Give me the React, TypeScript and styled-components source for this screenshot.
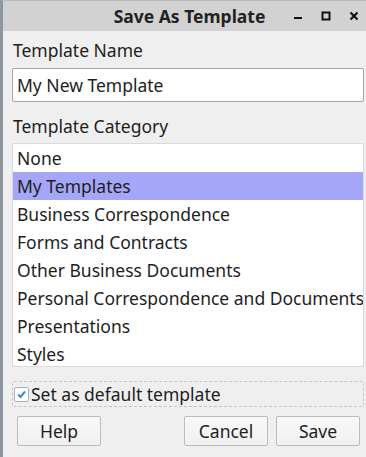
import React, { useState } from 'react';
import styled, { createGlobalStyle } from 'styled-components';

const GlobalStyle = createGlobalStyle`
  html, body {
    margin: 0;
    padding: 0;
    width: 366px;
    height: 457px;
    overflow: hidden;
    background: #efefef;
  }
  #root {
    height: 100%;
  }
`;

const Window = styled.div`
  display: flex;
  flex-direction: column;
  height: 457px;
  box-sizing: border-box;
  border-left: 3px solid #8e96a0;
  border-top: 1px solid #b8bcc2;
  background: #efefef;
  font-family: 'Noto Sans', 'Open Sans', sans-serif;
  font-size: 17.5px;
  color: #1e1e1e;
`;

const TitleBar = styled.div`
  display: flex;
  align-items: center;
  height: 30px;
  background: #d2d2d2;
  padding-right: 4px;
`;

const Title = styled.div`
  flex: 1;
  text-align: center;
  font-weight: bold;
  font-size: 17.5px;
  padding-left: 86px;
  color: #222;
  white-space: nowrap;
`;

const Controls = styled.div`
  display: flex;
  align-items: center;
  gap: 12px;
`;

const ControlButton = styled.span`
  display: flex;
  align-items: center;
  justify-content: center;
  width: 16px;
  height: 16px;
`;

const Body = styled.div`
  display: flex;
  flex-direction: column;
  flex: 1;
  padding: 5px 2px 0 9px;
`;

const Label = styled.div`
  height: 29px;
  line-height: 29px;
  padding-left: 1px;
`;

const TextInput = styled.input`
  box-sizing: border-box;
  height: 34px;
  width: 100%;
  border: 1px solid #a6a6a6;
  border-radius: 2px;
  background: #fff;
  padding: 0 4px;
  font: inherit;
  color: inherit;
  outline: none;
  margin: 3px 0 10px;
`;

const List = styled.ul`
  list-style: none;
  margin: 2px 0 0;
  padding: 0;
  background: #fff;
  border: 1px solid #dadada;
  height: 224px;
  box-sizing: border-box;
  overflow: hidden;
`;

const Item = styled.li<{ $selected?: boolean }>`
  height: 28px;
  line-height: 28px;
  padding-left: 4px;
  white-space: nowrap;
  background: ${(p) => (p.$selected ? '#a6a6f8' : 'transparent')};
`;

const CheckRow = styled.label`
  display: flex;
  align-items: center;
  gap: 2px;
  height: 26px;
  margin-top: 14px;
  padding-left: 1px;
  border: 1px dashed #c4c4d4;
  border-radius: 2px;
  box-sizing: border-box;
`;

const CheckBox = styled.span`
  display: flex;
  align-items: center;
  justify-content: center;
  width: 13px;
  height: 13px;
  border: 1px solid #b0b0b0;
  border-radius: 2px;
  background: #fff;
`;

const ButtonRow = styled.div`
  display: flex;
  gap: 8px;
  margin-top: 9px;
  padding: 0 4px 0 5px;
`;

const Spacer = styled.div`
  flex: 1;
`;

const Button = styled.button`
  width: 84px;
  height: 30px;
  box-sizing: border-box;
  border: 1px solid #bcbcbc;
  border-radius: 2px;
  background: linear-gradient(#f8f8f8, #f0f0f0);
  font: inherit;
  color: inherit;
  padding: 0;
`;

const categories = [
  'None',
  'My Templates',
  'Business Correspondence',
  'Forms and Contracts',
  'Other Business Documents',
  'Personal Correspondence and Documents',
  'Presentations',
  'Styles',
];

export default function App() {
  const [name, setName] = useState('My New Template');
  const [selected, setSelected] = useState(1);

  return (
    <>
      <GlobalStyle />
      <Window>
        <TitleBar>
          <Title>Save As Template</Title>
          <Controls>
            <ControlButton>
              <svg width="10" height="10" viewBox="0 0 10 10">
                <rect x="1" y="6" width="8" height="2" fill="#111" />
              </svg>
            </ControlButton>
            <ControlButton>
              <svg width="10" height="10" viewBox="0 0 10 10">
                <rect x="1.5" y="1.5" width="7" height="7" fill="none" stroke="#111" strokeWidth="2" />
              </svg>
            </ControlButton>
            <ControlButton>
              <svg width="10" height="10" viewBox="0 0 10 10">
                <path d="M1.5 1.5 L8.5 8.5 M8.5 1.5 L1.5 8.5" stroke="#111" strokeWidth="2.2" />
              </svg>
            </ControlButton>
          </Controls>
        </TitleBar>
        <Body>
          <Label>Template Name</Label>
          <TextInput value={name} onChange={(e) => setName(e.target.value)} />
          <Label>Template Category</Label>
          <List>
            {categories.map((c, i) => (
              <Item key={c} $selected={i === selected} onClick={() => setSelected(i)}>
                {c}
              </Item>
            ))}
          </List>
          <CheckRow>
            <CheckBox>
              <svg width="11" height="11" viewBox="0 0 11 11">
                <path d="M2 5.5 L4.5 8 L9 2.5" fill="none" stroke="#4a86c8" strokeWidth="2" />
              </svg>
            </CheckBox>
            Set as default template
          </CheckRow>
          <ButtonRow>
            <Button>Help</Button>
            <Spacer />
            <Button>Cancel</Button>
            <Button>Save</Button>
          </ButtonRow>
        </Body>
      </Window>
    </>
  );
}
